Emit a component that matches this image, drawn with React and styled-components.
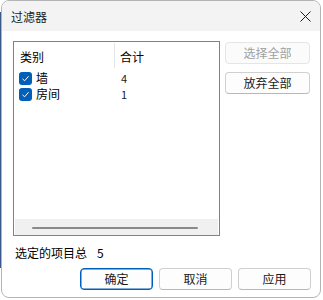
import React from 'react';
import styled, { createGlobalStyle } from 'styled-components';

const GlobalStyle = createGlobalStyle`
  html, body {
    margin: 0;
    padding: 0;
    background: #ffffff;
  }
  body {
    font-family: "Noto Sans CJK SC", "Noto Sans", sans-serif;
    font-size: 12px;
    color: #000;
  }
`;

const rows = [
  { name: '墙', count: 4 },
  { name: '房间', count: 1 },
];

const Screen = styled.div`
  position: relative;
  width: 323px;
  height: 300px;
  padding-left: 1px;
  box-sizing: border-box;
  &::before {
    content: '';
    position: absolute;
    left: 0;
    top: 12px;
    width: 1px;
    height: 256px;
    background: #3b5a8c;
  }
`;

const Window = styled.div`
  position: relative;
  width: 320px;
  height: 298px;
  box-sizing: border-box;
  border: 1px solid #b4b4b4;
  border-radius: 8px;
  background: #ffffff;
  overflow: hidden;
  display: flex;
  flex-direction: column;
`;

const TitleBar = styled.div`
  height: 30px;
  flex: none;
  background: #f3f3f3;
  display: flex;
  align-items: center;
  justify-content: space-between;
  padding: 0 9px 0 9px;
`;

const Title = styled.span`
  font-size: 12px;
  line-height: 14px;
  color: #1a1a1a;
  margin-top: 1px;
`;

const CloseIcon = () => (
  <svg width="11" height="11" viewBox="0 0 11 11">
    <path d="M0.5 0.5 L10.5 10.5 M10.5 0.5 L0.5 10.5" stroke="#1a1a1a" strokeWidth="1" />
  </svg>
);

const Body = styled.div`
  flex: 1;
  display: flex;
  flex-direction: column;
  padding: 10px 9px 0 11px;
`;

const TopRow = styled.div`
  display: flex;
  gap: 5px;
`;

const ListBox = styled.div`
  width: 207px;
  height: 195px;
  box-sizing: border-box;
  border: 1px solid #828282;
  display: flex;
  flex-direction: column;
  background: #ffffff;
`;

const Header = styled.div`
  height: 26px;
  display: flex;
  flex: none;
`;

const HeaderCell = styled.div`
  width: ${p => p.$w}px;
  box-sizing: border-box;
  padding-left: ${p => p.$pad}px;
  padding-top: 7px;
  line-height: 14px;
  border-right: ${p => (p.$divider ? '1px solid #e5e5e5' : 'none')};
  margin-top: 1px;
`;

const Rows = styled.div`
  flex: 1;
  padding-top: 2px;
`;

const Row = styled.div`
  height: 16px;
  display: flex;
  align-items: center;
`;

const NameCell = styled.div`
  width: 101px;
  display: flex;
  align-items: center;
  padding-left: 5px;
  box-sizing: border-box;
  gap: 4px;
`;

const CountCell = styled.div`
  padding-left: 6px;
  line-height: 14px;
  font-size: 11px;
  color: #1a1a1a;
`;

const Check = styled.span`
  width: 13px;
  height: 13px;
  border-radius: 3px;
  background: #005fb8;
  display: inline-flex;
  align-items: center;
  justify-content: center;
`;

const CheckMark = () => (
  <svg width="9" height="9" viewBox="0 0 9 9">
    <path d="M1.5 4.8 L3.6 6.8 L7.6 2.2" fill="none" stroke="#ffffff" strokeWidth="1" />
  </svg>
);

const Label = styled.span`
  line-height: 14px;
`;

const HScroll = styled.div`
  height: 16px;
  margin: 0 1px;
  background: #f0f0f0;
  display: flex;
  align-items: center;
  padding-left: 17px;
  flex: none;
`;

const Thumb = styled.div`
  width: 166px;
  height: 2px;
  border-radius: 1px;
  background: #8a8a8a;
  margin-top: 1px;
`;

const SideButtons = styled.div`
  display: flex;
  flex-direction: column;
  gap: 8px;
  padding-top: 1px;
`;

const Button = styled.button`
  width: ${p => p.$w || 73}px;
  height: 22px;
  box-sizing: border-box;
  font-family: inherit;
  font-size: 12px;
  line-height: 14px;
  padding: 0;
  border-radius: 4px;
  background: ${p => (p.disabled ? '#fbfbfb' : '#fdfdfd')};
  color: ${p => (p.disabled ? '#a0a0a0' : '#1a1a1a')};
  border: 1px solid ${p => (p.$primary ? '#005fb8' : p.disabled ? '#e5e5e5' : '#d0d0d0')};
  border-bottom-color: ${p => (p.$primary ? '#005fb8' : p.disabled ? '#e5e5e5' : '#b8b8b8')};
  box-shadow: ${p => (p.$primary ? 'inset 0 0 0 0.5px #005fb8' : 'none')};
`;

const Total = styled.div`
  margin-top: 10px;
  padding-left: 2px;
  display: flex;
  gap: 10px;
  line-height: 14px;
`;

const Footer = styled.div`
  margin-top: 8px;
  display: flex;
  justify-content: flex-end;
  gap: 6px;
`;

export default function App() {
  return (
    <>
      <GlobalStyle />
      <Screen>
        <Window>
          <TitleBar>
            <Title>过滤器</Title>
            <CloseIcon />
          </TitleBar>
          <Body>
            <TopRow>
              <ListBox>
                <Header>
                  <HeaderCell $w={101} $pad={6} $divider>类别</HeaderCell>
                  <HeaderCell $w={100} $pad={5}>合计</HeaderCell>
                </Header>
                <Rows>
                  {rows.map(r => (
                    <Row key={r.name}>
                      <NameCell>
                        <Check><CheckMark /></Check>
                        <Label>{r.name}</Label>
                      </NameCell>
                      <CountCell>{r.count}</CountCell>
                    </Row>
                  ))}
                </Rows>
                <HScroll>
                  <Thumb />
                </HScroll>
              </ListBox>
              <SideButtons>
                <Button $w={85} disabled>选择全部</Button>
                <Button $w={85}>放弃全部</Button>
              </SideButtons>
            </TopRow>
            <Total>
              <span>选定的项目总</span>
              <span>5</span>
            </Total>
            <Footer>
              <Button $primary>确定</Button>
              <Button>取消</Button>
              <Button>应用</Button>
            </Footer>
          </Body>
        </Window>
      </Screen>
    </>
  );
}
